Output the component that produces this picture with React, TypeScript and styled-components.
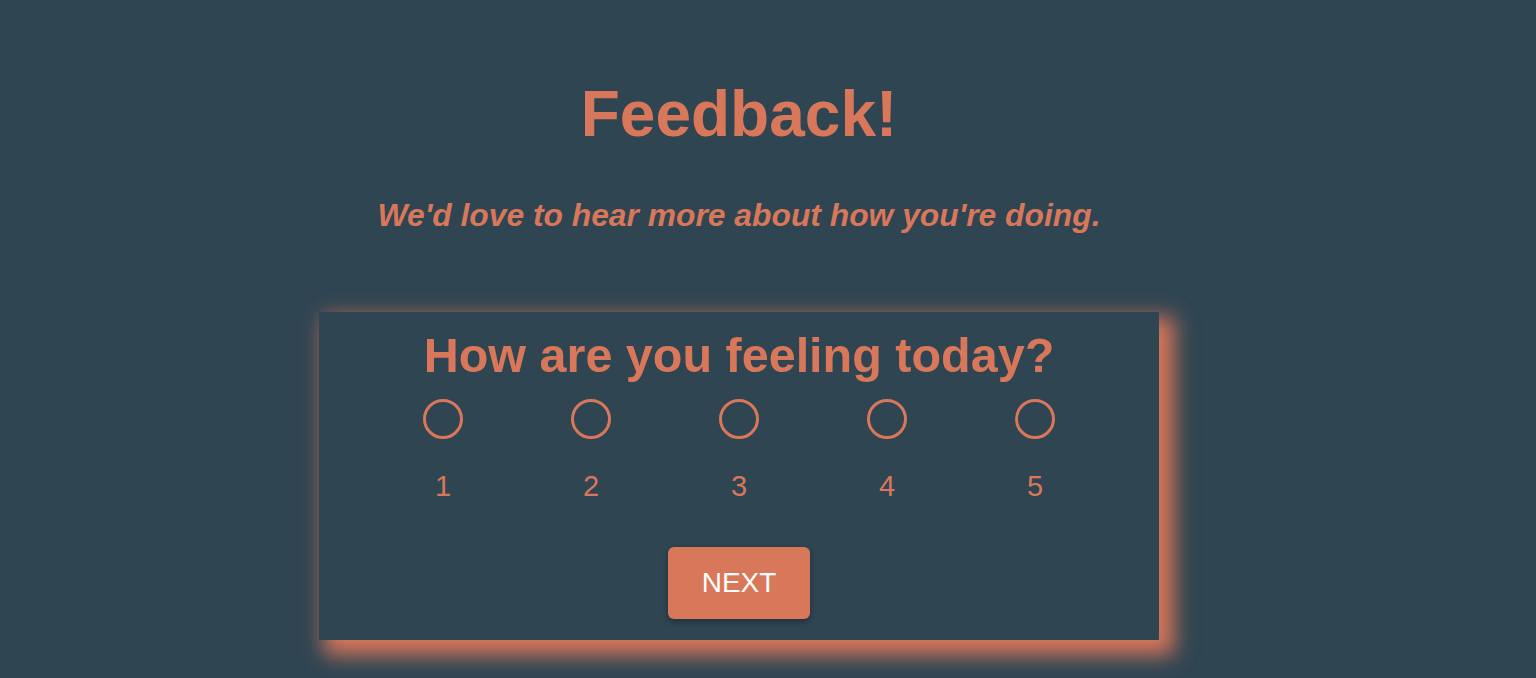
import React, { useState } from 'react'
import styled, { createGlobalStyle } from 'styled-components'

const orange = '#d9775a'
const slate = '#2f4552'

const GlobalStyle = createGlobalStyle`
    html, body {
        margin: 0;
        padding: 0;
        background: ${slate};
        font-family: 'Liberation Sans', Arial, Helvetica, sans-serif;
    }
`

const Page = styled.div`
    width: 1478px;
    min-height: 678px;
    display: flex;
    flex-direction: column;
    align-items: center;
    padding-top: 76px;
    box-sizing: border-box;
`

const Title = styled.h1`
    margin: 0;
    font-size: 64px;
    font-weight: 700;
    line-height: 76px;
    color: ${orange};
`

const Subtitle = styled.p`
    margin: 44px 0 0;
    font-size: 31.8px;
    font-weight: 700;
    font-style: italic;
    line-height: 38px;
    color: ${orange};
`

const Card = styled.div`
    margin-top: 78px;
    width: 840px;
    height: 328px;
    box-sizing: border-box;
    background: ${slate};
    box-shadow: 10px 10px 20px 5px ${orange};
    display: flex;
    flex-direction: column;
    align-items: center;
`

const Question = styled.h2`
    margin: 14px 0 0;
    font-size: 48.5px;
    font-weight: 700;
    line-height: 58px;
    color: ${orange};
`

const Options = styled.div`
    display: flex;
    margin-top: 15px;
`

const Option = styled.label`
    width: 148px;
    display: flex;
    flex-direction: column;
    align-items: center;
    cursor: pointer;
`

const Circle = styled.span<{ $checked: boolean }>`
    width: 40px;
    height: 40px;
    box-sizing: border-box;
    border: 3px solid ${orange};
    border-radius: 50%;
    display: flex;
    align-items: center;
    justify-content: center;

    &::after {
        content: '';
        width: 20px;
        height: 20px;
        border-radius: 50%;
        background: ${orange};
        display: ${(p) => (p.$checked ? 'block' : 'none')};
    }
`

const Number = styled.span`
    margin-top: 30px;
    font-size: 29px;
    line-height: 34px;
    color: ${orange};
`

const NextButton = styled.button`
    margin-top: 44px;
    width: 142px;
    height: 72px;
    border: none;
    border-radius: 6px;
    background: ${orange};
    color: #fff;
    font-family: 'Liberation Sans', Arial, Helvetica, sans-serif;
    font-size: 28px;
    box-shadow: 0 3px 6px rgba(0, 0, 0, 0.3);
    cursor: pointer;
`

const App = () => {
    const [mood, setMood] = useState<number | null>(null)

    return (
        <>
            <GlobalStyle />
            <Page>
                <Title>Feedback!</Title>
                <Subtitle>We'd love to hear more about how you're doing.</Subtitle>
                <Card>
                    <Question>How are you feeling today?</Question>
                    <Options>
                        {[1, 2, 3, 4, 5].map((n) => (
                            <Option key={n} onClick={() => setMood(n)}>
                                <Circle $checked={mood === n} />
                                <Number>{n}</Number>
                            </Option>
                        ))}
                    </Options>
                    <NextButton>NEXT</NextButton>
                </Card>
            </Page>
        </>
    )
}

export default App
